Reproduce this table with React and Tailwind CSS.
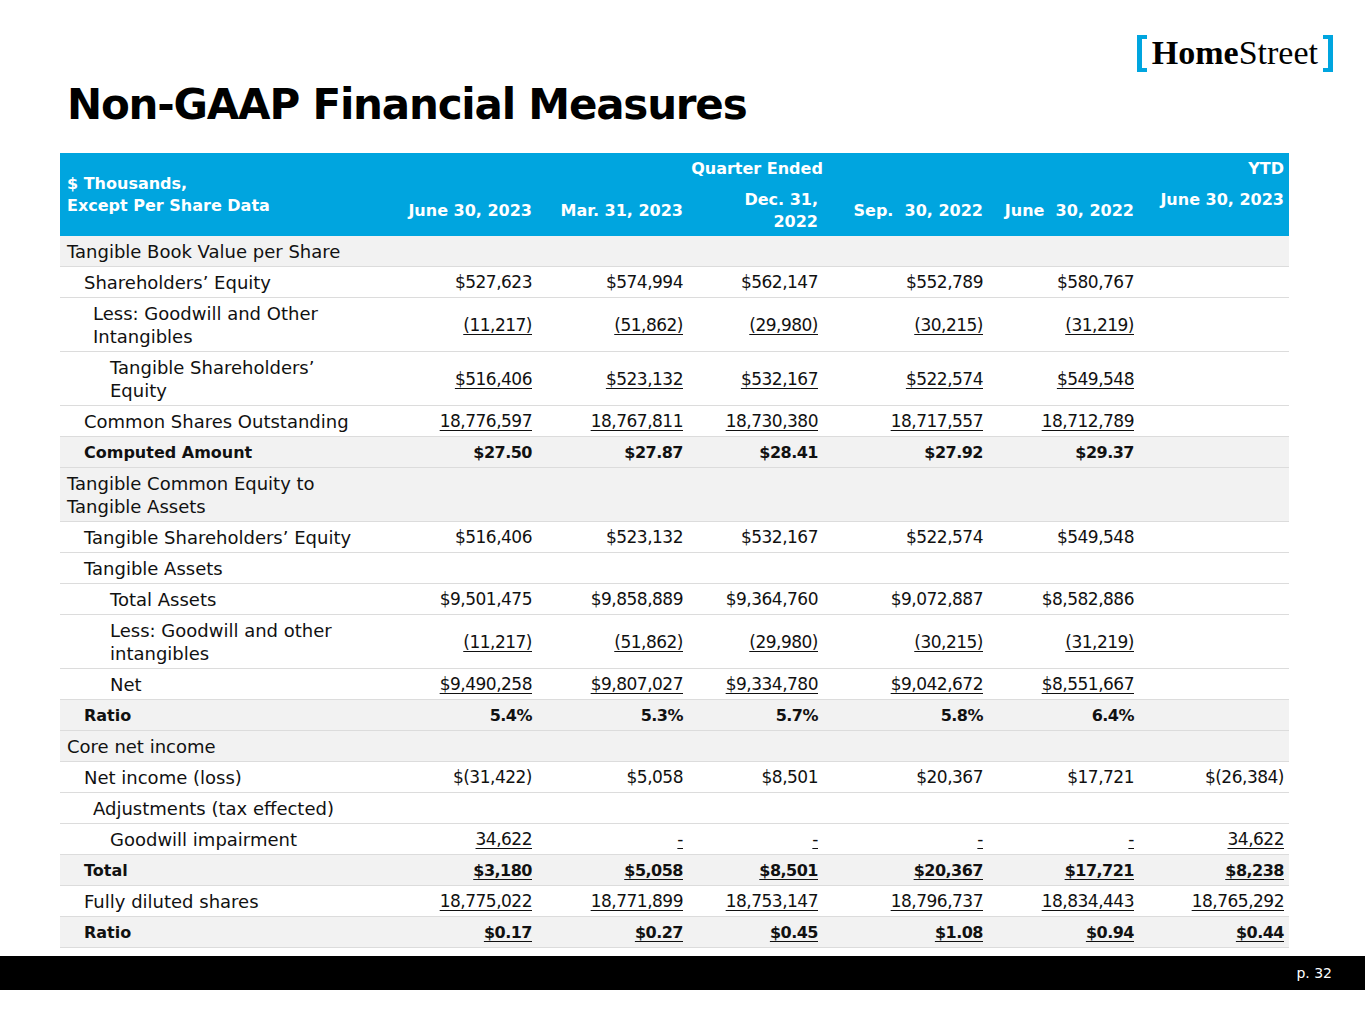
const COLS = 'grid grid-cols-[315px_162px_151px_135px_165px_151px_150px]'

const INDENT = {
  a: 'pl-[7px]',
  b: 'pl-[24px]',
  c: 'pl-[33px]',
  d: 'pl-[50px]',
}

const rows = [
  { label: ['Tangible Book Value per Share'], ind: 'a', gray: true },
  { label: ['Shareholders’ Equity'], ind: 'b', vals: ['$527,623', '$574,994', '$562,147', '$552,789', '$580,767', ''] },
  { label: ['Less: Goodwill and Other', 'Intangibles'], ind: 'c', u: true, vals: ['(11,217)', '(51,862)', '(29,980)', '(30,215)', '(31,219)', ''] },
  { label: ['Tangible Shareholders’', 'Equity'], ind: 'd', u: true, vals: ['$516,406', '$523,132', '$532,167', '$522,574', '$549,548', ''] },
  { label: ['Common Shares Outstanding'], ind: 'b', u: true, vals: ['18,776,597', '18,767,811', '18,730,380', '18,717,557', '18,712,789', ''] },
  { label: ['Computed Amount'], ind: 'b', gray: true, bold: true, vals: ['$27.50', '$27.87', '$28.41', '$27.92', '$29.37', ''] },
  { label: ['Tangible Common Equity to', 'Tangible Assets'], ind: 'a', gray: true },
  { label: ['Tangible Shareholders’ Equity'], ind: 'b', vals: ['$516,406', '$523,132', '$532,167', '$522,574', '$549,548', ''] },
  { label: ['Tangible Assets'], ind: 'b' },
  { label: ['Total Assets'], ind: 'd', vals: ['$9,501,475', '$9,858,889', '$9,364,760', '$9,072,887', '$8,582,886', ''] },
  { label: ['Less: Goodwill and other', 'intangibles'], ind: 'd', u: true, vals: ['(11,217)', '(51,862)', '(29,980)', '(30,215)', '(31,219)', ''] },
  { label: ['Net'], ind: 'd', u: true, vals: ['$9,490,258', '$9,807,027', '$9,334,780', '$9,042,672', '$8,551,667', ''] },
  { label: ['Ratio'], ind: 'b', gray: true, bold: true, vals: ['5.4%', '5.3%', '5.7%', '5.8%', '6.4%', ''] },
  { label: ['Core net income'], ind: 'a', gray: true },
  { label: ['Net income (loss)'], ind: 'b', vals: ['$(31,422)', '$5,058', '$8,501', '$20,367', '$17,721', '$(26,384)'] },
  { label: ['Adjustments (tax effected)'], ind: 'c' },
  { label: ['Goodwill impairment'], ind: 'd', u: true, vals: ['34,622', '-', '-', '-', '-', '34,622'] },
  { label: ['Total'], ind: 'b', gray: true, bold: true, u: true, vals: ['$3,180', '$5,058', '$8,501', '$20,367', '$17,721', '$8,238'] },
  { label: ['Fully diluted shares'], ind: 'b', u: true, vals: ['18,775,022', '18,771,899', '18,753,147', '18,796,737', '18,834,443', '18,765,292'] },
  { label: ['Ratio'], ind: 'b', gray: true, bold: true, u: true, vals: ['$0.17', '$0.27', '$0.45', '$1.08', '$0.94', '$0.44'] },
]

function Logo() {
  return (
    <div className="flex items-center h-[40px]">
      <span className="block w-[10px] h-[37px] border-l-[5px] border-t-[4px] border-b-[4px] border-[#00a5df]" />
      <span className="px-[5px] text-[34px] leading-none text-black font-['Liberation_Serif',serif]">
        <span className="font-bold">Home</span>Street
      </span>
      <span className="block w-[10px] h-[37px] border-r-[5px] border-t-[4px] border-b-[4px] border-[#00a5df]" />
    </div>
  )
}

function HeaderRow() {
  return (
    <div className={`${COLS} grid-rows-[32px_51px] h-[83px] bg-[#00a5df] text-white font-bold text-[16px] leading-[22px]`}>
      <div className="col-start-1 row-start-1 row-span-2 flex flex-col justify-center pl-[7px]">
        <span>$ Thousands,</span>
        <span>Except Per Share Data</span>
      </div>
      <div className="col-start-2 col-span-5 row-start-1 flex items-center justify-center">Quarter Ended</div>
      <div className="col-start-7 row-start-1 row-span-2 flex flex-col items-end pr-[5px]">
        <span className="h-[32px] flex items-center">YTD</span>
        <span className="mt-[4px]">June 30, 2023</span>
      </div>
      <div className="col-start-2 row-start-2 flex items-center justify-end pr-[5px]">June 30, 2023</div>
      <div className="col-start-3 row-start-2 flex items-center justify-end pr-[5px]">Mar. 31, 2023</div>
      <div className="col-start-4 row-start-2 flex flex-col justify-center items-end pr-[5px]">
        <span>Dec. 31,</span>
        <span>2022</span>
      </div>
      <div className="col-start-5 row-start-2 flex items-center justify-end pr-[5px] whitespace-pre">Sep.  30, 2022</div>
      <div className="col-start-6 row-start-2 flex items-center justify-end pr-[5px] whitespace-pre">June  30, 2022</div>
    </div>
  )
}

function BodyRow({ r }) {
  return (
    <div className={`${COLS} border-b border-[#dcdcdc] pt-[4px] pb-[3px] leading-[23px] ${r.gray ? 'bg-[#f2f2f2]' : 'bg-white'}`}>
      <div className={`${INDENT[r.ind]} ${r.bold ? 'font-bold text-[16px]' : 'text-[18px]'}`}>
        {r.label.map((l, i) => (
          <div key={i}>{l}</div>
        ))}
      </div>
      {(r.vals || ['', '', '', '', '', '']).map((v, i) => (
        <div
          key={i}
          className={`flex items-center justify-end pr-[5px] tracking-[-0.5px] ${r.bold ? 'font-bold text-[16px]' : 'text-[17px]'}`}
        >
          {v && <span className={r.u ? 'underline underline-offset-[3px] decoration-1' : ''}>{v}</span>}
        </div>
      ))}
    </div>
  )
}

export default function App() {
  return (
    <div className="w-[1365px] h-[1024px] bg-white text-[#111] font-['DejaVu_Sans',sans-serif] overflow-hidden">
      <div className="pt-[33px] pr-[32px] flex justify-end">
        <Logo />
      </div>
      <h1 className="mt-[11px] pl-[67px] text-[42px] leading-[42px] font-bold tracking-[-1.2px] text-black">
        Non-GAAP Financial Measures
      </h1>
      <div className="mt-[27px] ml-[60px] w-[1229px]">
        <HeaderRow />
        {rows.map((r, i) => (
          <BodyRow key={i} r={r} />
        ))}
      </div>
      <div className="mt-[8px] h-[34px] bg-black flex items-center justify-end pr-[33px]">
        <span className="text-white text-[14px]">p. 32</span>
      </div>
    </div>
  )
}
